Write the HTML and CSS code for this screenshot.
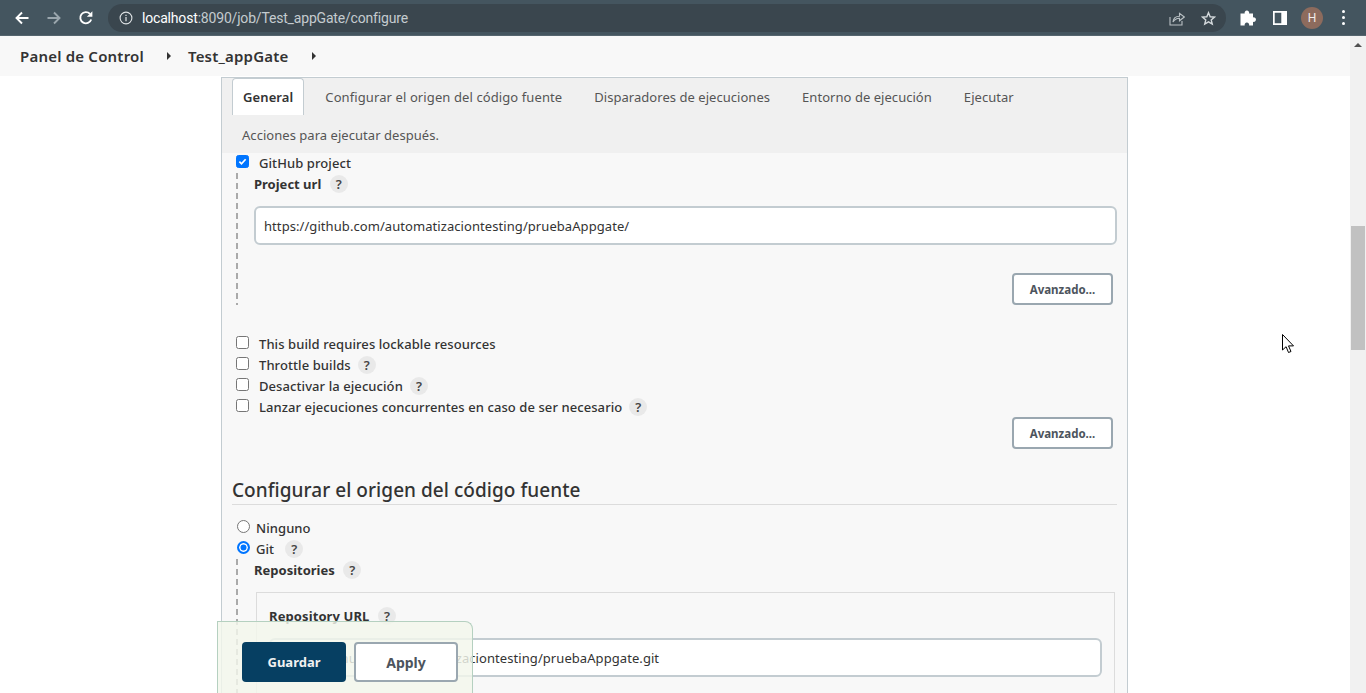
FILE: index.html
```html
<!DOCTYPE html>
<html lang="en">
<head>
    <meta charset="UTF-8">
    <title>Test_appGate Config</title>
    <link rel="stylesheet" href="styles.css">
</head>
<body>
    <header class="chrome">
        <svg class="nav-icon back" viewBox="0 0 16 16"><path d="M14.5 8H2.5M8 2.5 2.5 8 8 13.5" fill="none" stroke="#fff" stroke-width="1.9"/></svg>
        <svg class="nav-icon forward" viewBox="0 0 16 16"><path d="M1.5 8h12M8 2.5 13.5 8 8 13.5" fill="none" stroke="#9aa6ad" stroke-width="1.9"/></svg>
        <svg class="nav-icon reload" viewBox="0 0 16 16"><path d="M13.2 9.5A5.6 5.6 0 1 1 12 3.9" fill="none" stroke="#fff" stroke-width="1.9"/><path d="M14.4 1.2v5.6H8.8z" fill="#fff"/></svg>
        <div class="omnibox">
            <svg class="info" viewBox="0 0 14 14"><circle cx="7" cy="7" r="5.9" fill="none" stroke="#dfe3e5" stroke-width="1.1"/><path d="M7 6v4.2M7 3.8v1.3" stroke="#dfe3e5" stroke-width="1.2"/></svg>
            <span class="url"><b>localhost</b>:8090/job/Test_appGate/configure</span>
            <svg class="share" viewBox="0 0 16 16"><path d="M1 7v8h12v-4" fill="none" stroke="#b9c0c4" stroke-width="1.1"/><path d="M4 12c.4-4 3.300-5.800 6.500-5.800V3.300L15.300 7l-4.800 3.800V8.200C7.800 8 5.600 9.600 4 12z" fill="none" stroke="#b9c0c4" stroke-width="1.1"/></svg>
            <svg class="star" viewBox="0 0 16 16"><path d="M8 1.800l1.800 4.300 4.600.4-3.500 3 1.100 4.500L8 11.600 4 14l1.100-4.500-3.500-3 4.600-.4z" fill="none" stroke="#d3d8db" stroke-width="1.5"/></svg>
        </div>
        <svg class="ext" viewBox="0 0 16 16"><path d="M0 4.500h4.200a2.300 2.300 0 1 1 4.400 0H12.500v3.900a2.300 2.300 0 1 1 0 4.400V16.500H8.600a2.300 2.300 0 1 0-4.400 0H0z" transform="translate(.5 -1)" fill="#fff"/></svg>
        <svg class="side" viewBox="0 0 14 14"><path d="M0 0h14v14H0zM1.700 1.700v10.600h6.600V1.700z" fill="#fff" fill-rule="evenodd"/></svg>
        <span class="avatar">H</span>
        <span class="dots"><i></i><i></i><i></i></span>
    </header>

    <div class="viewport">
        <div class="page">
            <nav class="breadcrumb">
                <a>Panel de Control</a><span class="caret"></span>
                <a>Test_appGate</a><span class="caret"></span>
            </nav>

            <main class="panel">
                <div class="tabs">
                    <div class="tab active">General</div>
                    <div class="tab long">Configurar el origen del código fuente</div>
                    <div class="tab">Disparadores de ejecuciones</div>
                    <div class="tab">Entorno de ejecución</div>
                    <div class="tab">Ejecutar</div>
                    <div class="tab">Acciones para ejecutar después.</div>
                </div>

                <div class="row check-row first">
                    <span class="box checked"><svg viewBox="0 0 13 13"><path d="M2.800 6.700 5.300 9.200 10.200 3.800" fill="none" stroke="#fff" stroke-width="2"/></svg></span>
                    <span class="label">GitHub project</span>
                </div>
                <div class="nested github">
                    <div class="field-title">Project url <span class="help">?</span></div>
                    <div class="input url-input">https://github.com/automatizaciontesting/pruebaAppgate/</div>
                    <div class="actions"><button class="btn-adv">Avanzado...</button></div>
                </div>

                <div class="options">
                    <div class="row check-row"><span class="box"></span><span class="label">This build requires lockable resources</span></div>
                    <div class="row check-row"><span class="box"></span><span class="label">Throttle builds</span><span class="help">?</span></div>
                    <div class="row check-row"><span class="box"></span><span class="label">Desactivar la ejecución</span><span class="help">?</span></div>
                    <div class="row check-row"><span class="box"></span><span class="label">Lanzar ejecuciones concurrentes en caso de ser necesario</span><span class="help">?</span></div>
                </div>
                <div class="actions second"><button class="btn-adv">Avanzado...</button></div>

                <h2 class="section-title">Configurar el origen del código fuente</h2>

                <div class="row radio-row first-radio"><span class="radio"></span><span class="label">Ninguno</span></div>
                <div class="row radio-row"><span class="radio on"></span><span class="label">Git</span><span class="help">?</span></div>
                <div class="nested git">
                    <div class="field-title">Repositories <span class="help">?</span></div>
                    <div class="repo">
                        <div class="field-title">Repository URL <span class="help">?</span></div>
                        <div class="input repo-input">https://github.com/automatizaciontesting/pruebaAppgate.git</div>
                    </div>
                </div>
            </main>

            <div class="bottom-bar">
                <button class="btn-save">Guardar</button>
                <button class="btn-apply">Apply</button>
            </div>
        </div>

        <div class="scrollbar">
            <span class="arrow"></span>
            <span class="thumb"></span>
        </div>

        <svg class="cursor" viewBox="0 0 13 20"><path d="M.5.5v15.500l3.600-3.300 2.400 5.800 2.500-1-2.500-5.600h5z" fill="#fff" stroke="#000" stroke-width="1"/></svg>
    </div>
</body>
</html>
```

FILE: styles.css
```css
* {
    box-sizing: border-box;
}

html, body {
    height: 100%;
}

body {
    margin: 0;
    height: 693px;
    overflow: hidden;
    display: flex;
    flex-direction: column;
    background: #fff;
    color: #333;
    font-family: "Noto Sans", sans-serif;
    font-size: 13px;
}

/* browser bar */
.chrome {
    height: 36px;
    flex: none;
    display: flex;
    align-items: center;
    background: #44555f;
    border-bottom: 1px solid #55656e;
    padding-left: 14px;
}

.nav-icon {
    width: 16px;
    height: 16px;
}

.forward {
    margin-left: 16px;
}

.reload {
    margin-left: 16px;
}

.omnibox {
    width: 1118px;
    height: 28px;
    margin-left: 14px;
    margin-top: 1px;
    border-radius: 14px;
    background: #3a464e;
    display: flex;
    align-items: center;
    padding-left: 11px;
}

.info {
    width: 14px;
    height: 14px;
}

.url {
    margin-left: 9px;
    flex: 1;
    color: #c4cbcf;
    font-family: "Roboto", sans-serif;
    font-size: 14px;
    letter-spacing: -.18px;
}

.url b {
    color: #fff;
    font-weight: 400;
}

.share {
    width: 16px;
    height: 16px;
}

.star {
    width: 15px;
    height: 15px;
    margin-left: 16px;
    margin-right: 10px;
}

.ext {
    width: 16px;
    height: 16px;
    margin-left: 14px;
}

.side {
    width: 14px;
    height: 14px;
    margin-left: 17px;
}

.avatar {
    width: 22px;
    height: 22px;
    border-radius: 50%;
    margin-left: 14px;
    background: #8d6b5d;
    color: #f2ece9;
    font-family: "Roboto", sans-serif;
    font-size: 12px;
    display: flex;
    align-items: center;
    justify-content: center;
}

.dots {
    display: flex;
    flex-direction: column;
    gap: 3px;
    margin-left: 19px;
}

.dots i {
    width: 3px;
    height: 3px;
    border-radius: 50%;
    background: #fff;
}

/* page below the browser bar */
.viewport {
    flex: 1;
    display: flex;
    position: relative;
    min-height: 0;
}

.page {
    flex: 1;
    position: relative;
    overflow: hidden;
}

.breadcrumb {
    height: 40px;
    background: #f8f8f8;
    display: flex;
    align-items: center;
    padding-left: 20px;
    font-size: 15px;
    font-weight: 600;
    letter-spacing: .2px;
    color: #333;
}

.caret {
    width: 0;
    height: 0;
    margin-left: 23px;
    margin-right: 17px;
    border-left: 4px solid #333;
    border-top: 4px solid transparent;
    border-bottom: 4px solid transparent;
}

.panel {
    width: 907px;
    height: 700px;
    margin: 1px 0 0 221px;
    background: #f8f8f8;
    border: 1px solid #c3ccd1;
    border-bottom: none;
    padding-bottom: 10px;
}

.tabs {
    display: flex;
    flex-wrap: wrap;
    height: 75px;
    background: #f0f0f0;
    padding-left: 10px;
    color: #555;
    align-content: flex-start;
}

.tab {
    height: 37px;
    line-height: 38px;
    padding: 0 11px;
    margin-right: 10px;
    letter-spacing: .04px;
}

.tab.long {
    letter-spacing: .1px;
}

.tab.active {
    background: #fff;
    border: 1px solid #c3ccd1;
    border-bottom: none;
    border-radius: 4px 4px 0 0;
    font-weight: 600;
    color: #333;
    padding: 0 10px;
    line-height: 36px;
    letter-spacing: .1px;
}

.tab:last-child {
    flex-basis: 100%;
    margin-top: 1px;
    padding-left: 10px;
}

.row {
    display: flex;
    align-items: center;
    height: 21px;
}

.first {
    margin-top: -1px;
}

.check-row {
    padding-left: 14px;
}

.label {
    color: #333;
    font-weight: 500;
    letter-spacing: .08px;
}

.check-row .label {
    margin-left: 10px;
}

.box {
    width: 13px;
    height: 13px;
    border: 1px solid #767676;
    border-radius: 2.500px;
    background: #fff;
    display: block;
    position: relative;
    top: -1px;
}

.box.checked {
    background: #0075ff;
    border-color: #0075ff;
}

.box svg {
    display: block;
    width: 11px;
    height: 11px;
}

.help {
    width: 18px;
    height: 18px;
    border-radius: 50%;
    background: #e9e9e9;
    color: #444;
    font-size: 13px;
    font-weight: 600;
    letter-spacing: 0;
    display: inline-flex;
    align-items: center;
    justify-content: center;
    margin-left: 7px;
    vertical-align: middle;
}

.field-title .help {
    margin-left: 5px;
    position: relative;
    top: -1px;
}

.radio-row .help {
    margin-left: 11px;
}

/* dashed guide down the left of an opened option */
.nested {
    margin-left: 14px;
    padding-left: 18px;
    padding-top: 1px;
    background: repeating-linear-gradient(#aaa 0 6px, transparent 6px 10px) left top / 2px 100% no-repeat;
}

.field-title {
    font-weight: 700;
    color: #333;
    height: 21px;
    line-height: 21px;
}

.input {
    background: #fff;
    border: 2px solid #c3ccd1;
    border-radius: 6px;
    color: #333;
    height: 39px;
    line-height: 36px;
    padding-left: 8px;
    letter-spacing: .07px;
}

.url-input {
    width: 863px;
    margin-top: 11px;
}

.github {
    height: 132px;
}

.actions {
    display: flex;
    justify-content: flex-end;
    width: 859px;
    margin-top: 28px;
}

.btn-adv {
    width: 101px;
    height: 32px;
    background: #fff;
    border: 2px solid #9aa7b0;
    border-radius: 4px;
    font-family: inherit;
    font-size: 11.500px;
    font-weight: 700;
    color: #4d545d;
    padding: 0;
}

.options {
    margin-top: 28px;
}

.actions.second {
    width: 891px;
    margin-top: 0;
}

.section-title {
    margin: 26px 10px 0;
    height: 30px;
    border-bottom: 1px solid #dcdcdc;
    font-size: 19px;
    font-weight: 500;
    line-height: 30px;
    letter-spacing: .05px;
    color: #333;
}

.radio-row {
    padding-left: 15px;
}

.first-radio {
    margin-top: 12px;
}

.radio {
    width: 13px;
    height: 13px;
    border: 1px solid #767676;
    border-radius: 50%;
    background: #fff;
    position: relative;
    top: -1px;
}

.radio.on {
    border: 2px solid #0075ff;
    box-shadow: inset 0 0 0 1.500px #fff;
    background: #0075ff;
}

.radio-row .label {
    margin-left: 6px;
}

.repo {
    width: 859px;
    height: 200px;
    margin-top: 11px;
    margin-left: 2px;
    border: 1px solid #dcdcdc;
    padding: 13px 12px;
}

.repo .field-title {
    letter-spacing: .1px;
}

.repo-input {
    width: 833px;
    margin-top: 11px;
}

/* sticky save bar, lies over the form */
.bottom-bar {
    position: absolute;
    left: 217px;
    top: 585px;
    width: 256px;
    height: 80px;
    background: rgba(243, 247, 235, .82);
    border: 1px solid #b5d0c0;
    border-bottom: none;
    border-radius: 0 8px 0 0;
    display: flex;
    gap: 8px;
    padding: 20px 0 0 24px;
}

.btn-save, .btn-apply {
    height: 40px;
    border-radius: 4px;
    font-family: inherit;
    font-size: 13px;
    font-weight: 700;
}

.btn-save {
    width: 104px;
    background: #063f62;
    border: none;
    color: #f0f0f0;
}

.btn-apply {
    width: 104px;
    background: #fff;
    border: 2px solid #9aa7b0;
    color: #4d545d;
    font-size: 14px;
}

.scrollbar {
    width: 16px;
    flex: none;
    background: #f1f1f1;
    position: relative;
}

.arrow {
    display: block;
    width: 0;
    height: 0;
    margin: 7px auto 0;
    border-left: 4px solid transparent;
    border-right: 4px solid transparent;
    border-bottom: 4px solid #505050;
}

.thumb {
    display: block;
    width: 14px;
    height: 124px;
    margin: 179px 0 0 1px;
    background: #c1c1c1;
}

.cursor {
    position: absolute;
    left: 1282px;
    top: 298px;
    width: 13px;
    height: 20px;
}
```
